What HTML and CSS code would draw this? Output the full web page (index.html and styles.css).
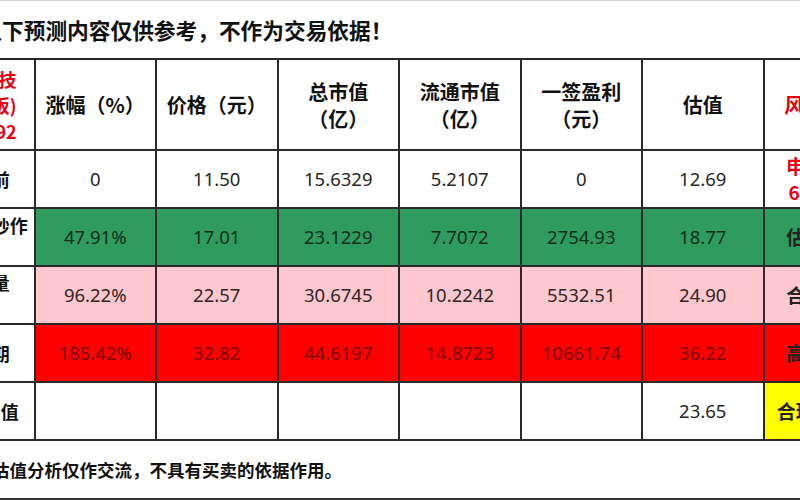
FILE: index.html
```html
<!DOCTYPE html>
<html lang="zh-CN">
<head>
<meta charset="utf-8">
<title>估值预测</title>
<link rel="stylesheet" href="styles.css">
</head>
<body>
<div class="page">
  <p class="title">以下预测内容仅供参考，不作为交易依据！</p>
  <table class="grid">
    <colgroup>
      <col class="c"><col class="c"><col class="c"><col class="c"><col class="c"><col class="c"><col class="c"><col class="c">
    </colgroup>
    <tr class="head">
      <th class="lab red">N英力科技<br>(深创业板)<br>SZ300992</th>
      <th>涨幅（%）</th>
      <th>价格（元）</th>
      <th>总市值<br>（亿）</th>
      <th>流通市值<br>（亿）</th>
      <th>一签盈利<br>（元）</th>
      <th>估值</th>
      <th class="risk red">风险提示</th>
    </tr>
    <tr class="row">
      <th class="lab">上市之前</th>
      <td>0</td><td>11.50</td><td>15.6329</td><td>5.2107</td><td>0</td><td>12.69</td>
      <td class="side red">申购日期<br>6月29日</td>
    </tr>
    <tr class="row green">
      <th class="lab top">一般市场炒作<br>（参考）</th>
      <td>47.91%</td><td>17.01</td><td>23.1229</td><td>7.7072</td><td>2754.93</td><td>18.77</td>
      <td class="side">估值偏低</td>
    </tr>
    <tr class="row pink">
      <th class="lab">温和放量<br>（中性）</th>
      <td>96.22%</td><td>22.57</td><td>30.6745</td><td>10.2242</td><td>5532.51</td><td>24.90</td>
      <td class="side">合理偏高</td>
    </tr>
    <tr class="row hot">
      <th class="lab">乐观预期</th>
      <td>185.42%</td><td>32.82</td><td>44.6197</td><td>14.8723</td><td>10661.74</td><td>36.22</td>
      <td class="side">高估风险</td>
    </tr>
    <tr class="row">
      <th class="lab">行业平均值</th>
      <td></td><td></td><td></td><td></td><td></td><td>23.65</td>
      <td class="side yellow">合理估值区</td>
    </tr>
  </table>
  <p class="note">注：以上估值分析仅作交流，不具有买卖的依据作用。</p>
</div>
</body>
</html>
```
FILE: styles.css
```css
html, body {
  margin: 0;
  padding: 0;
}
body {
  width: 800px;
  height: 500px;
  overflow: hidden;
  background: #ffffff;
  font-family: "Noto Sans", "Noto Sans CJK SC", sans-serif;
}
.page {
  height: 500px;
  box-sizing: border-box;
  border-top: 1px solid #d4d4d4;
  border-bottom: 2px solid #333333;
  display: flex;
  flex-direction: column;
  overflow: hidden;
}
.title {
  flex: none;
  margin: 0 0 0 -19.7px;
  height: 57px;
  font: 700 21.7px/58px "Noto Sans CJK SC", sans-serif;
  color: #111111;
  white-space: nowrap;
}
.grid {
  flex: none;
  border-collapse: collapse;
  table-layout: fixed;
  width: 972px;
  margin-left: -88px;
}
.grid .c {
  width: 121.5px;
}
.grid tr.head {
  height: 91px;
}
.grid tr.row {
  height: 58px;
}
.grid th,
.grid td {
  border: 2px solid #2a2a2a;
  padding: 0;
  text-align: center;
  vertical-align: middle;
  white-space: nowrap;
  overflow: hidden;
  box-sizing: border-box;
}
.grid th {
  font: 700 20px/27px "Noto Sans CJK SC", sans-serif;
  color: #111111;
}
.grid td {
  font: 400 18.5px/26px "Noto Sans", "Noto Sans CJK SC", sans-serif;
  color: #262626;
}
.grid .lab {
  font: 700 18px/26px "Noto Sans CJK SC", sans-serif;
}
.grid .lab.top {
  vertical-align: top;
  padding-top: 3px;
}
.grid .side {
  font: 700 19px/26px "Noto Sans CJK SC", sans-serif;
  color: #222222;
}
.grid .risk {
  font-size: 20px;
}
.grid .red {
  color: #e60012;
}
.green td {
  background: #2f9b5f;
  color: #0c3019;
}
.pink td {
  background: #ffc7ce;
  color: #2e2626;
}
.hot td {
  background: #ff0000;
  color: #7a0606;
}
.grid .yellow {
  background: #ffff00;
  color: #222222;
}
.note {
  flex: 1;
  margin: 0 0 0 -78px;
  display: flex;
  align-items: center;
  font: 700 17.5px "Noto Sans CJK SC", sans-serif;
  color: #111111;
  white-space: nowrap;
}
```
